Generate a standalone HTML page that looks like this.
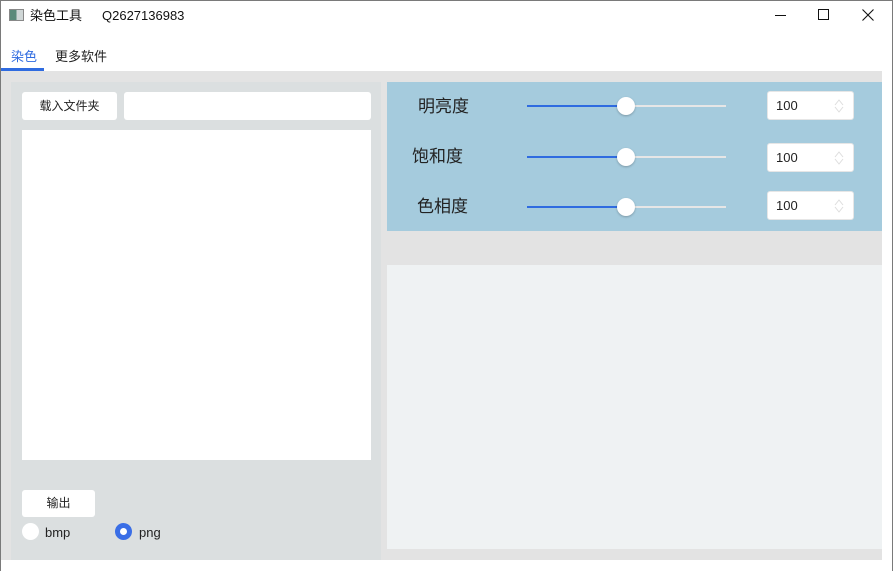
<!DOCTYPE html>
<html><head><meta charset="utf-8"><style>
*{margin:0;padding:0;box-sizing:border-box}
body{width:893px;height:571px;position:relative;background:#fff;font-family:"Liberation Sans","Noto Sans CJK SC",sans-serif;overflow:hidden;}
.a{position:absolute}
.t{line-height:1}
.lbl{font-size:17px;color:#222;line-height:20px}
.track{height:2px;background:#e6e6e6;width:199px;left:527px}
.fill{height:2px;background:#2f6be0;width:99px;left:527px}
.thumb{width:18px;height:18px;border-radius:50%;background:#fff;left:617px;box-shadow:0 1px 2px rgba(0,0,0,.25)}
.spin{left:767px;width:87px;height:29px;background:#fff;border-radius:3px;border:1px solid #e6e6e6;font-size:13px;line-height:27px;padding-left:8px;color:#222}
.spin svg{position:absolute;right:9px;top:6px}
.btn{background:#fff;border-radius:3px;font-size:12px;text-align:center;color:#222}
</style></head><body>
<div class="a" style="left:9px;top:9px;width:15px;height:12px;border:1px solid #888;background:linear-gradient(90deg,#5a8a7a 0 50%,#cfd6d6 50%)"></div>
<div class="a" style="left:30px;top:7px;font-size:13px;line-height:17px;color:#111">染色工具</div>
<div class="a" style="left:102px;top:7px;font-size:13px;line-height:17px;color:#111">Q2627136983</div>
<div class="a" style="left:775px;top:15px;width:11px;height:1px;background:#111"></div>
<div class="a" style="left:818px;top:9px;width:11px;height:11px;border:1px solid #111"></div>
<svg class="a" style="left:862px;top:9px" width="12" height="12"><path d="M0.5 0.5L11.5 11.5M11.5 0.5L0.5 11.5" stroke="#111" stroke-width="1.1"/></svg>
<div class="a" style="left:11px;top:48px;font-size:13px;line-height:17px;color:#2f6be0">染色</div>
<div class="a" style="left:55px;top:48px;font-size:13px;line-height:17px;color:#222">更多软件</div>
<div class="a" style="left:0;top:68px;width:44px;height:3px;background:#2f6be0"></div>
<div class="a" style="left:0;top:71px;width:882px;height:489px;background:#e3e3e3"></div>
<div class="a" style="left:11px;top:82px;width:370px;height:478px;background:#dbdfe0"></div>
<div class="a btn" style="left:22px;top:92px;width:95px;height:28px;line-height:28px">载入文件夹</div>
<div class="a" style="left:124px;top:92px;width:247px;height:28px;background:#fff;border-radius:3px"></div>
<div class="a" style="left:22px;top:130px;width:349px;height:330px;background:#fff"></div>
<div class="a btn" style="left:22px;top:490px;width:73px;height:27px;line-height:27px">输出</div>
<div class="a" style="left:22px;top:523px;width:17px;height:17px;border-radius:50%;background:#fff"></div>
<div class="a" style="left:45px;top:524px;font-size:13px;line-height:17px;color:#222">bmp</div>
<div class="a" style="left:115px;top:523px;width:17px;height:17px;border-radius:50%;border:5px solid #3a6ee6;background:#fff"></div>
<div class="a" style="left:139px;top:524px;font-size:13px;line-height:17px;color:#222">png</div>
<div class="a" style="left:387px;top:82px;width:495px;height:149px;background:#a5cbdd"></div>
<div class="a" style="left:387px;top:265px;width:495px;height:284px;background:#eff2f3"></div>

<div class="a lbl" style="left:418px;top:97px">明亮度</div>
<div class="a track" style="top:105px"></div><div class="a fill" style="top:105px"></div><div class="a thumb" style="top:97px"></div>
<div class="a spin" style="top:91px">100<svg width="10" height="16"><path d="M1 7L5 2L9 7M1 9L5 14L9 9" fill="none" stroke="#ddd"/></svg></div>

<div class="a lbl" style="left:412px;top:147px">饱和度</div>
<div class="a track" style="top:156px"></div><div class="a fill" style="top:156px"></div><div class="a thumb" style="top:148px"></div>
<div class="a spin" style="top:143px">100<svg width="10" height="16"><path d="M1 7L5 2L9 7M1 9L5 14L9 9" fill="none" stroke="#ddd"/></svg></div>

<div class="a lbl" style="left:417px;top:197px">色相度</div>
<div class="a track" style="top:206px"></div><div class="a fill" style="top:206px"></div><div class="a thumb" style="top:198px"></div>
<div class="a spin" style="top:191px">100<svg width="10" height="16"><path d="M1 7L5 2L9 7M1 9L5 14L9 9" fill="none" stroke="#ddd"/></svg></div>
<div class="a" style="left:0;top:0;width:893px;height:571px;border:1px solid #7a7a7a;border-bottom:none"></div>
</body></html>
